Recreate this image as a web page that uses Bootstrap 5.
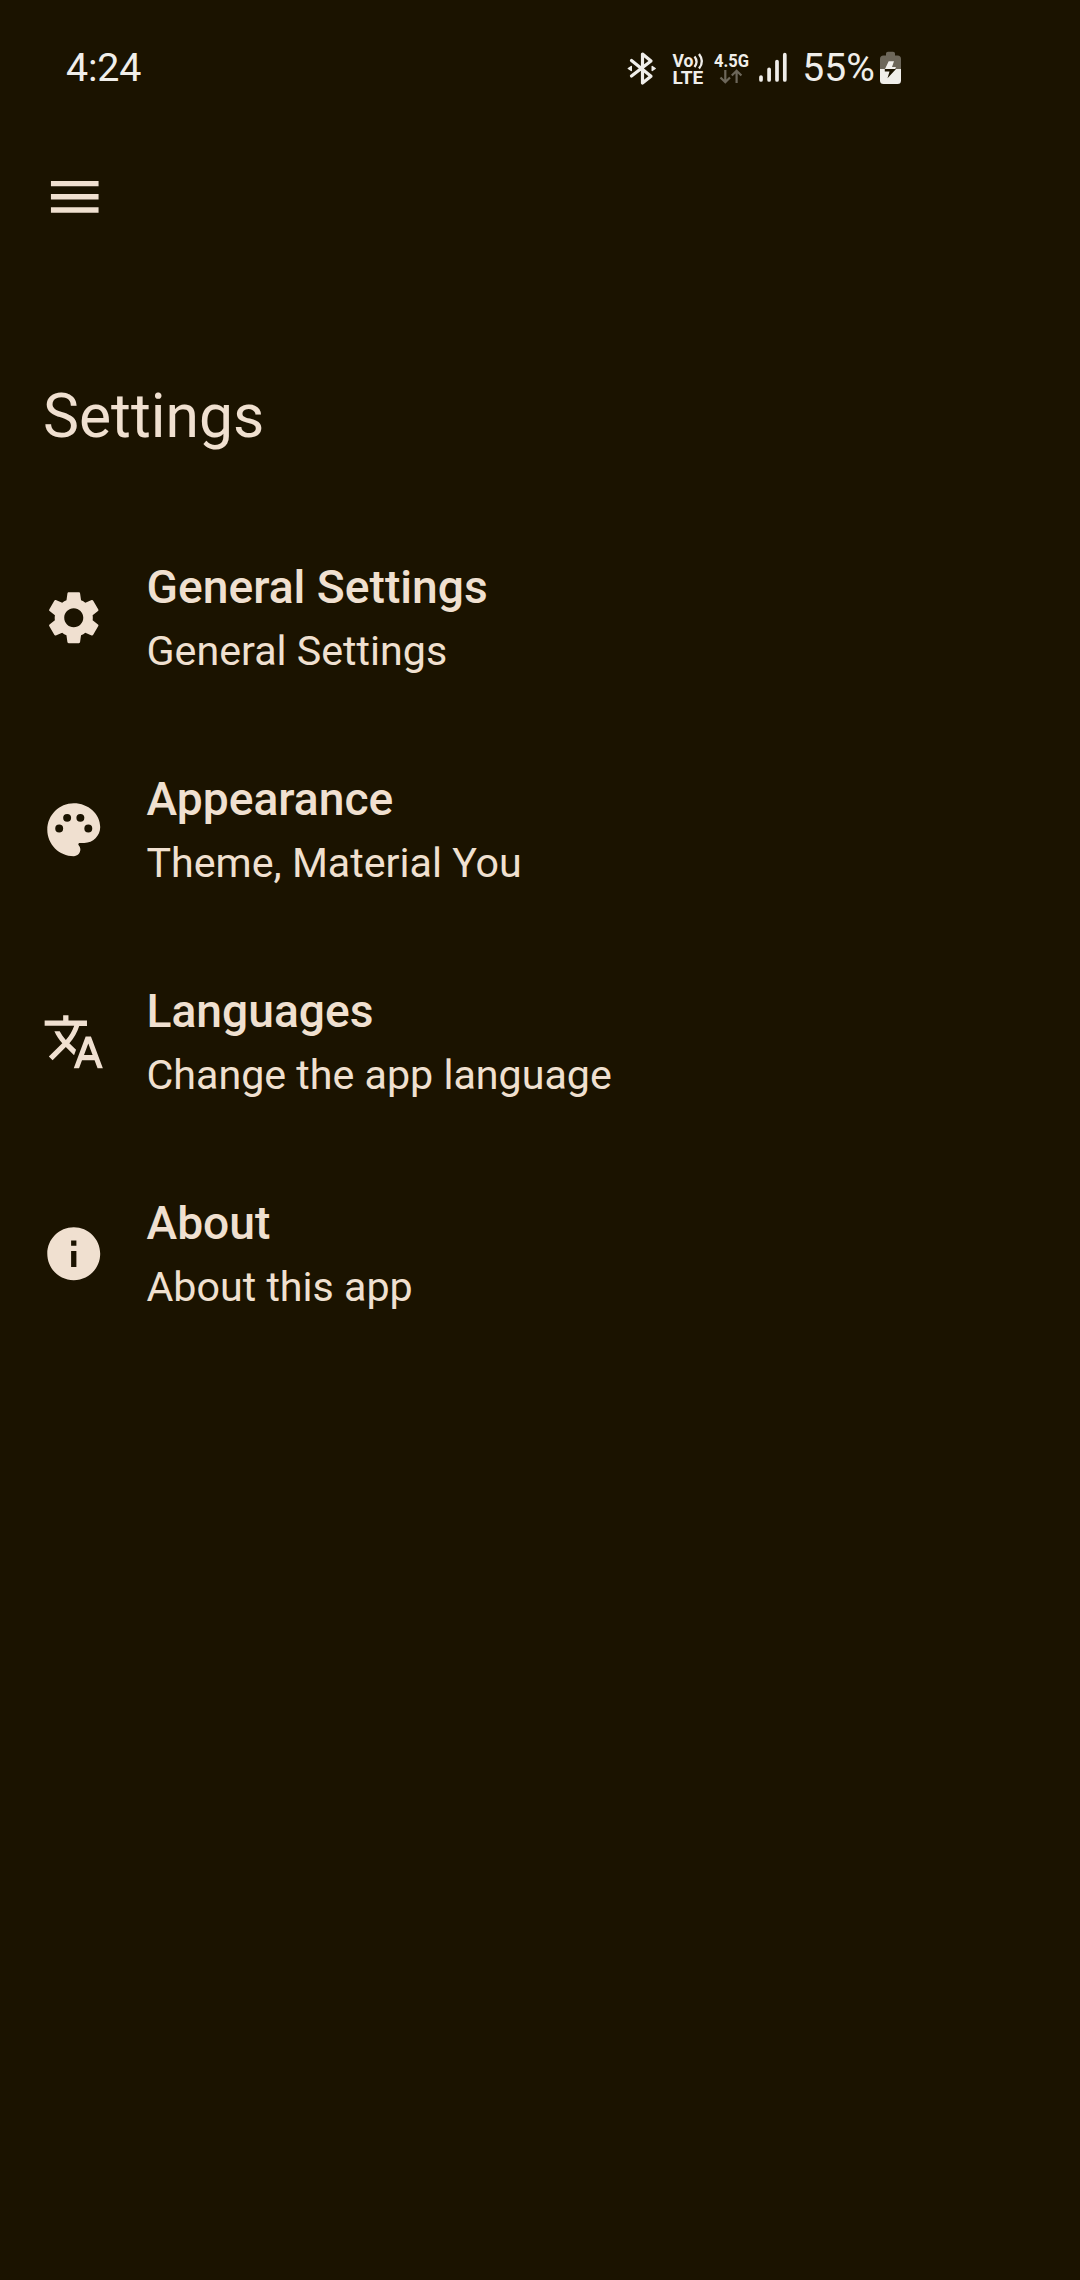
<!DOCTYPE html>
<html lang="en">
<head>
<meta charset="utf-8">
<meta name="viewport" content="width=device-width, initial-scale=1">
<title>Settings</title>
<link href="https://cdn.jsdelivr.net/npm/bootstrap@5.3.0/dist/css/bootstrap.min.css" rel="stylesheet">
<style>
  body { background: #1b1300; color: #f0e0d0; font-family: Roboto, "Noto Sans", sans-serif; min-height: 2280px; }
  .status-bar { height: 136px; padding-left: 66px; padding-right: 178px; color: #f0eeea; font-size: 39.4px; line-height: 46px; }
  .status-bar .clock { letter-spacing: -.2px; }
  .status-icons { width: 292px; height: 60px; }
  .top-bar { height: 121px; padding-left: 43px; }
  .menu-btn { line-height: 0; border: 0; color: inherit; }
  .glyph { width: 63.5px; height: 63.5px; fill: currentColor; flex: none; display: block; }
  .page-title { font-size: 60.6px; line-height: 70px; font-weight: 400; margin: 125px 0 0 43px; }
  .setting-list { margin-top: 60px; }
  .setting-item { height: 212px; padding: 0 42px; gap: 41px; background: none; color: inherit; border: 0; }
  .item-title { font-size: 46.2px; line-height: 62px; font-weight: 500; }
  .item-note { font-size: 41.2px; line-height: 62px; padding-top: 2px; margin-bottom: -2px; }
</style>
<script src="https://cdn.jsdelivr.net/npm/bootstrap@5.3.0/dist/js/bootstrap.bundle.min.js"></script>
</head>
<body>
<header>
  <div class="status-bar d-flex align-items-center justify-content-between">
    <span class="clock">4:24</span>
    <svg class="status-icons" viewBox="610 38 292 60" fill="#f0eeea" font-family="Roboto, sans-serif">
      <!-- bluetooth -->
      <path d="M631.5 60.5 651 76.3 642.5 83V54L651 61 631.5 76" fill="none" stroke="#f0eeea" stroke-width="3.2" stroke-linejoin="round" stroke-linecap="round"/>
      <path d="M628.3 68.5 631.3 66.5V70.5ZM655.2 68.5 652.2 66.5V70.5Z" stroke="#f0eeea" stroke-width="1.4" stroke-linejoin="round"/>
      <!-- VoLTE -->
      <text x="672.5" y="67" font-size="18.5" font-weight="700" textLength="21" lengthAdjust="spacingAndGlyphs">Vo</text>
      <path d="M694.5 56.5Q698.5 61.5 694.5 67M699 54Q704.8 61.5 699 68.5" fill="none" stroke="#f0eeea" stroke-width="2.3"/>
      <text x="672.5" y="84" font-size="18.5" font-weight="700" textLength="30.7" lengthAdjust="spacingAndGlyphs">LTE</text>
      <!-- network type and traffic arrows -->
      <text x="714" y="67" font-size="18.5" font-weight="700" textLength="35" lengthAdjust="spacingAndGlyphs">4.5G</text>
      <path d="M725.3 70V82M720.5 77.5 725.3 82.3 730 77.5M736.6 83V71M731.8 75.5 736.6 70.7 741.4 75.5" fill="none" stroke="#6d675a" stroke-width="2.2"/>
      <!-- signal -->
      <path d="M761 77V80M769.1 69.3V80M777 61.5V80M784.8 54.7V80" stroke="#f0eeea" stroke-width="3.7" stroke-linecap="round"/>
      <text x="802.3" y="81.3" font-size="39.4" textLength="72.5" lengthAdjust="spacingAndGlyphs">55%</text>
      <!-- battery -->
      <path d="M880 69V59Q880 55.5 883.5 55.5H886V53.5Q886 51.7 888 51.7H893Q895 51.7 895 53.5V55.5H897.5Q901 55.5 901 59V69Z" fill="#6d675a"/>
      <path d="M880 69H901V80.5Q901 84 897.5 84H883.5Q880 84 880 80.5Z"/>
      <path d="M888.7 61.3H894L892 67H896L895 69H885Z"/>
      <path d="M884.8 69H896L887.5 78.3 889.5 71.5H884.8Z" fill="#1b1300"/>
    </svg>
  </div>
  <nav class="top-bar d-flex align-items-center">
    <button class="menu-btn btn p-0" type="button" aria-label="Menu">
      <svg class="glyph" viewBox="0 0 24 24"><path d="M3 18h18v-2H3v2zm0-5h18v-2H3v2zm0-7v2h18V6H3z"/></svg>
    </button>
  </nav>
</header>
<main>
  <h1 class="page-title">Settings</h1>
  <div class="setting-list list-group list-group-flush">
    <a class="setting-item list-group-item d-flex align-items-center" href="#">
      <svg class="glyph" viewBox="0 0 24 24"><path d="M19.14 12.94c.04-.3.06-.61.06-.94 0-.32-.02-.64-.07-.94l2.03-1.58c.18-.14.23-.41.12-.61l-1.92-3.32c-.12-.22-.37-.29-.59-.22l-2.39.96c-.5-.38-1.03-.7-1.62-.94l-.36-2.54c-.04-.24-.24-.41-.48-.41h-3.84c-.24 0-.43.17-.47.41l-.36 2.54c-.59.24-1.13.57-1.62.94l-2.39-.96c-.22-.08-.47 0-.59.22L2.74 8.87c-.12.21-.08.47.12.61l2.03 1.58c-.05.3-.09.63-.09.94s.02.64.07.94l-2.03 1.58c-.18.14-.23.41-.12.61l1.92 3.32c.12.22.37.29.59.22l2.39-.96c.5.38 1.03.7 1.62.94l.36 2.54c.05.24.24.41.48.41h3.84c.24 0 .44-.17.47-.41l.36-2.54c.59-.24 1.13-.56 1.62-.94l2.39.96c.22.08.47 0 .59-.22l1.92-3.32c.12-.22.07-.47-.12-.61l-2.01-1.58zM12 15.6c-1.98 0-3.6-1.62-3.6-3.6s1.62-3.6 3.6-3.6 3.6 1.62 3.6 3.6-1.62 3.6-3.6 3.6z"/></svg>
      <div><div class="item-title">General Settings</div><div class="item-note">General Settings</div></div>
    </a>
    <a class="setting-item list-group-item d-flex align-items-center" href="#">
      <svg class="glyph" viewBox="0 0 24 24"><path fill-rule="evenodd" d="M12 2C6.49 2 2 6.49 2 12s4.49 10 10 10c1.38 0 2.5-1.12 2.5-2.5 0-.61-.23-1.2-.64-1.67-.08-.1-.13-.21-.13-.33 0-.28.22-.5.5-.5H16c3.31 0 6-2.69 6-6 0-4.96-4.49-9-10-9zM6.5 13a1.5 1.5 0 1 1 0-3 1.5 1.5 0 0 1 0 3zm3-4a1.5 1.5 0 1 1 0-3 1.5 1.5 0 0 1 0 3zm5 0a1.5 1.5 0 1 1 0-3 1.5 1.5 0 0 1 0 3zm3 4a1.5 1.5 0 1 1 0-3 1.5 1.5 0 0 1 0 3z"/></svg>
      <div><div class="item-title">Appearance</div><div class="item-note">Theme, Material You</div></div>
    </a>
    <a class="setting-item list-group-item d-flex align-items-center" href="#">
      <svg class="glyph" viewBox="0 0 24 24"><path d="M12.87 15.07l-2.54-2.51.03-.03c1.74-1.94 2.98-4.17 3.71-6.53H17V4h-7V2H8v2H1v1.99h11.17C11.5 7.92 10.44 9.75 9 11.35 8.07 10.32 7.3 9.19 6.69 8h-2c.73 1.63 1.73 3.17 2.98 4.56l-5.09 5.02L4 19l5-5 3.11 3.11.76-2.04zM18.5 10h-2L12 22h2l1.12-3h4.75L21 22h2l-4.5-12zm-2.62 7l1.62-4.33L19.12 17h-3.24z"/></svg>
      <div><div class="item-title">Languages</div><div class="item-note">Change the app language</div></div>
    </a>
    <a class="setting-item list-group-item d-flex align-items-center" href="#">
      <svg class="glyph" viewBox="0 0 24 24"><path d="M12 2C6.48 2 2 6.48 2 12s4.48 10 10 10 10-4.48 10-10S17.52 2 12 2zm1 15h-2v-6h2v6zm0-8h-2V7h2v2z"/></svg>
      <div><div class="item-title">About</div><div class="item-note">About this app</div></div>
    </a>
  </div>
</main>
</body>
</html>
